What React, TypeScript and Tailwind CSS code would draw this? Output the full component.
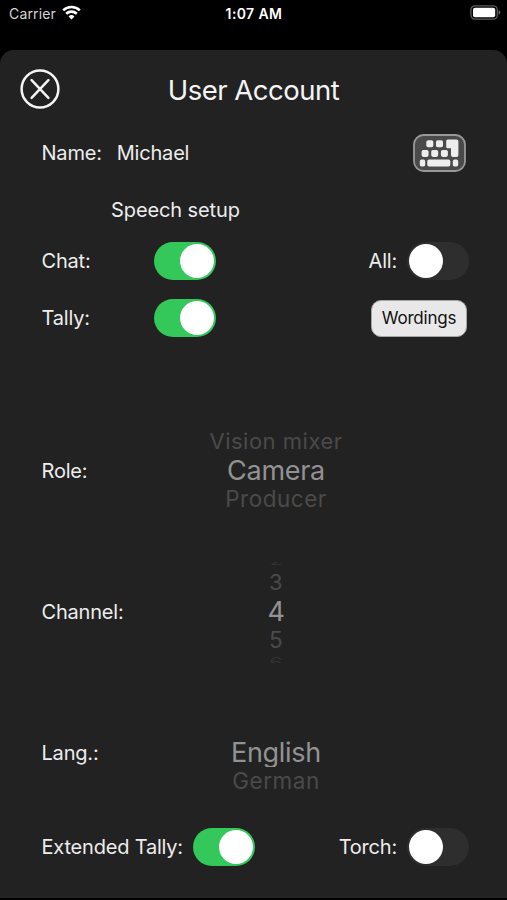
import clsx from 'clsx';

function WifiIcon() {
  return (
    <svg className="h-[15px] w-[19px]" viewBox="0 0 19 15" fill="none" stroke="#fff" strokeWidth="2.6">
      <path d="M1.2 5.4a12 12 0 0 1 16.6 0" />
      <path d="M4.2 8.7a7.7 7.7 0 0 1 10.6 0" />
      <path d="M9.5 14.4 6.5 11.5a4.3 4.3 0 0 1 6 0z" fill="#fff" stroke="none" />
    </svg>
  );
}

function BatteryIcon() {
  return (
    <svg className="h-[15px] w-[31px]" viewBox="0 0 31 15">
      <rect x="0.9" y="0.9" width="26.4" height="13.2" rx="4" fill="none" stroke="#5c5c5c" strokeWidth="1.3" />
      <rect x="3" y="2.8" width="22.2" height="9.4" rx="2" fill="#fff" />
      <path d="M28.6 5.3c2.2.6 2.2 3.8 0 4.4z" fill="#6b6b6b" />
    </svg>
  );
}

function CloseIcon() {
  return (
    <svg className="size-10" viewBox="0 0 40 40" fill="none" stroke="#f4f4f4" strokeLinecap="round">
      <circle cx="20" cy="20" r="18.4" strokeWidth="2.5" />
      <path d="m11.6 11.2 16.8 17.6M28.4 11.2 11.6 28.8" strokeWidth="2.5" />
    </svg>
  );
}

function KeyboardIcon() {
  return (
    <svg className="h-[38px] w-[53px]" viewBox="0 0 53 38" fill="#ededed">
      <rect x="1" y="1" width="51" height="36" rx="9.5" fill="#4a4a4a" stroke="#989898" strokeWidth="1.8" />
      <rect x="13.3" y="6.2" width="7" height="7" rx="1.8" />
      <rect x="23" y="6.2" width="7" height="7" rx="1.8" />
      <path d="M34.8 5.5h8.6a2 2 0 0 1 2 2v13.6a2 2 0 0 1-2 2H40a2 2 0 0 1-2-2v-6.8h-3.2a1.6 1.6 0 0 1-1.6-1.6V7.1a1.6 1.6 0 0 1 1.6-1.6z" />
      <rect x="8.6" y="15.9" width="7" height="7" rx="1.8" />
      <rect x="18.2" y="15.9" width="7" height="7" rx="1.8" />
      <rect x="27.9" y="15.9" width="7" height="7" rx="1.8" />
      <rect x="6.8" y="25.6" width="5.4" height="7" rx="1.8" />
      <rect x="14.3" y="25.6" width="23" height="7" rx="1.8" />
      <rect x="39.8" y="25.6" width="5.4" height="7" rx="1.8" />
    </svg>
  );
}

function Toggle({ on = false }: { on?: boolean }) {
  return (
    <button
      role="switch"
      aria-checked={on}
      className={clsx(
        'flex h-[38px] w-[62px] shrink-0 items-center rounded-full',
        on ? 'justify-end bg-[#34c759] pr-[2px]' : 'justify-start bg-[#2e2e2e] pl-[2px]'
      )}
    >
      <span className="size-[34px] rounded-full bg-white" />
    </button>
  );
}

function Picker({ above, value, below, edges = false }: { above?: string; value: string; below: string; edges?: boolean }) {
  return (
    <div className="flex w-[220px] flex-col items-center">
      <div className="h-1.5 text-[21px] leading-none text-[#333333] [clip-path:inset(2px_0_0_0)]">
        {edges && <span className="block -translate-y-[9px] scale-y-50">2</span>}
      </div>
      <div className="mt-0.5 flex h-[29px] items-center text-[22px] tracking-[0.5px] text-[#4a4a4a]">
        <span className="-translate-y-px">{above}</span>
      </div>
      <div className="flex h-[29px] items-center text-[27px] leading-none tracking-[-0.3px] text-[#929292] [clip-path:inset(0)]">
        {value}
      </div>
      <div className="flex h-[29px] items-center text-[22.5px] tracking-[0.5px] text-[#4a4a4a]">
        <span className="-translate-y-px">{below}</span>
      </div>
      <div className="mt-0.5 h-1.5 text-[21px] leading-none text-[#333333] [clip-path:inset(0)]">
        {edges && <span className="block -translate-y-[5px] scale-y-60">6</span>}
      </div>
    </div>
  );
}

export default function App() {
  return (
    <div className="flex h-[900px] w-[507px] flex-col overflow-hidden bg-black font-['Inter',sans-serif] text-[#ededed]">
      <header className="grid h-[50px] grid-cols-3 items-start pt-[5px] pr-[6px] pl-[9px] text-[14px] leading-[17px]">
        <div className="flex gap-[6px] text-[#d4d4d4]">
          <span className="tracking-[0.15px]">Carrier</span>
          <WifiIcon />
        </div>
        <span className="-ml-[2px] text-center font-semibold tracking-[0.4px] text-white">1:07 AM</span>
        <div className="flex justify-end">
          <BatteryIcon />
        </div>
      </header>

      <main className="flex h-[848px] flex-col rounded-t-[14px] bg-[#222222] text-[20px] leading-[28px] tracking-[-0.2px]">
        <div className="grid h-20 grid-cols-[80px_1fr_80px] items-center">
          <button className="ml-5 size-10 -translate-y-px" aria-label="Close">
            <CloseIcon />
          </button>
          <h1 className="text-center text-[27.5px] tracking-[-0.5px] text-[#f4f4f4]">User Account</h1>
        </div>

        <section className="flex h-[46px] items-center pr-[41px] pl-[41.5px]">
          <span>Name:</span>
          <span className="ml-[15px]">Michael</span>
          <button className="ml-auto" aria-label="Keyboard">
            <KeyboardIcon />
          </button>
        </section>

        <h2 className="mt-3 flex h-11 items-center pl-[111px] tracking-[-0.1px]">Speech setup</h2>
        <section className="flex h-[57px] items-center pr-[38px] pl-[41.5px]">
          <span className="w-[112.5px]">Chat:</span>
          <Toggle on />
          <span className="mr-[10px] ml-auto">All:</span>
          <Toggle />
        </section>
        <section className="flex h-[58px] items-center pr-10 pl-[41.5px]">
          <span className="w-[112.5px]">Tally:</span>
          <Toggle on />
          <button className="ml-auto h-[37px] w-24 rounded-[10px] border border-[#a5a5a5] bg-[#e8e8e8] text-[17px] tracking-[-0.2px] text-[#111111]">
            Wordings
          </button>
        </section>

        <section className="mt-[63px] flex h-[121px] items-center pl-[41.5px]">
          <span className="w-[124.5px]">Role:</span>
          <Picker above="Vision mixer" value="Camera" below="Producer" />
        </section>
        <section className="mt-5 flex h-[121px] items-center pl-[41.5px]">
          <span className="w-[124.5px]">Channel:</span>
          <Picker above="3" value="4" below="5" edges />
        </section>
        <section className="mt-5 flex h-[121px] items-center pl-[41.5px]">
          <span className="w-[124.5px]">Lang.:</span>
          <Picker value="English" below="German" />
        </section>

        <section className="flex h-[68px] items-center pr-[38px] pl-[41.5px]">
          <span className="w-[151px] whitespace-nowrap">Extended Tally:</span>
          <Toggle on />
          <span className="mr-[10px] ml-auto">Torch:</span>
          <Toggle />
        </section>
      </main>
    </div>
  );
}
